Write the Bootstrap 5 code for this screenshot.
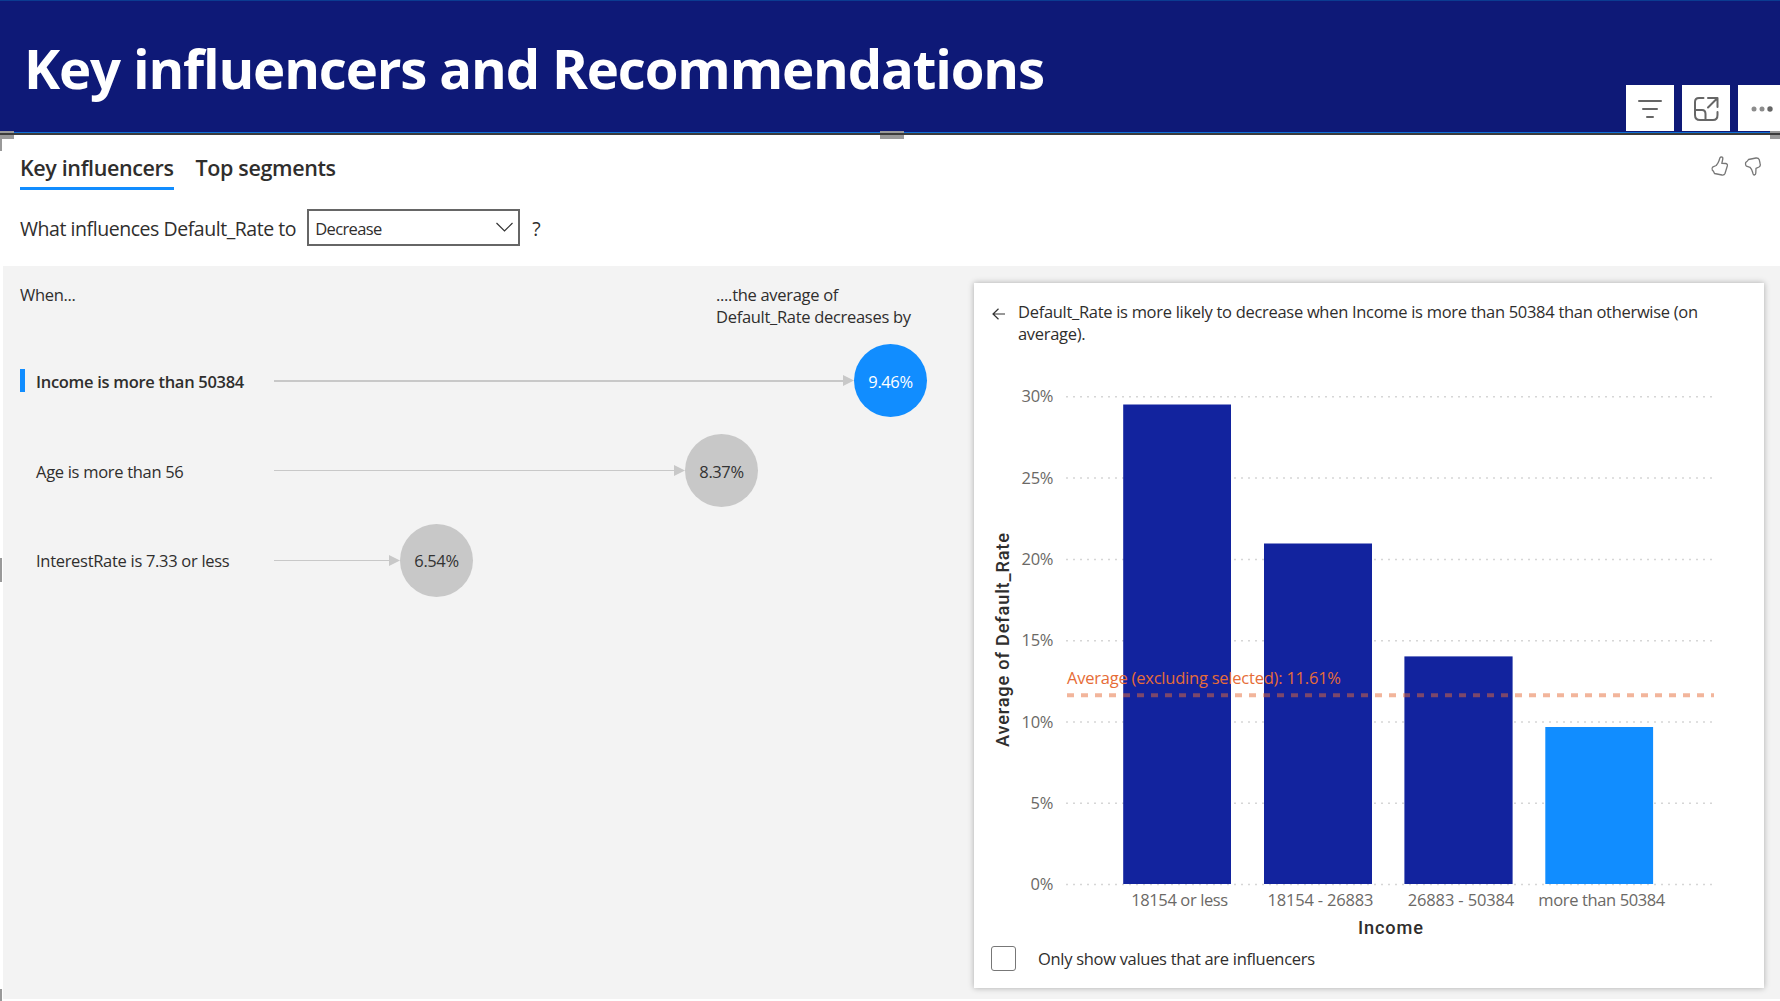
<!DOCTYPE html>
<html lang="en">
<head>
<meta charset="utf-8">
<meta name="viewport" content="width=device-width, initial-scale=1">
<title>Key influencers and Recommendations</title>
<link href="https://cdn.jsdelivr.net/npm/bootstrap@5.3.0/dist/css/bootstrap.min.css" rel="stylesheet">
<style>
  body { font-family: "Open Sans", "Noto Sans", sans-serif; font-size: 16.5px; line-height: 22px; letter-spacing: -.3px; color: #2f2e2d; height: 1001px; overflow: hidden; background: #fff; }
  svg { display: block; flex: none; }
  .report-head { height: 135px; background: #0e1977; border-top: 1px solid #0b3c91; border-bottom: 2px solid #3b3b3b; box-shadow: inset 0 -1px 0 #0f6fd6; padding: 29px 0 0 24px; }
  .report-head h1 { font-size: 54.5px; line-height: 76px; font-weight: 700; letter-spacing: -1.16px; }
  .visual-tools { right: -6px; bottom: 2px; gap: 8px; }
  .tool-btn { width: 48px; height: 46px; background: #fff; border: 0; border-radius: 0; padding: 0; }
  .visual-top { height: 131px; padding: 18px 19px 0 20px; }
  .vtab { font-size: 21.5px; line-height: 28px; font-weight: 600; letter-spacing: -.37px; padding: 1px 0 5px; border-bottom: 3px solid transparent; }
  .vtab.active { border-color: #118dff; }
  .vtab + .vtab { margin-left: 22px; }
  .question { font-size: 19.5px; letter-spacing: -.45px; height: 37px; margin-top: 19px; }
  .question > span { padding-top: 2px; }
  .direction { width: 213px; height: 37px; border: 2px solid #666; border-radius: 0; padding: 0 5px 0 6px; font-size: 16.5px; letter-spacing: -.6px; color: #2f2e2d; margin: 0 12px 0 11px; background: #fff; }
  .direction span { padding-top: 2px; }
  .visual-body { height: 733px; margin-left: 3px; background: #f3f3f3; }
  .list-side { width: 971px; }
  .list-head { height: 70px; padding: 18px 0 0 17px; }
  .avg-head { width: 258px; }
  .factor { height: 89.75px; padding-left: 17px; }
  .marker { width: 5px; height: 23px; margin-right: 11px; }
  .factor.selected .marker { background: #118dff; }
  .factor.selected .factor-name { font-weight: 600; }
  .factor-name { width: 238px; padding-top: 2px; }
  .stem { height: 11px; }
  .stem i { height: 1.5px; background: #c8c8c8; }
  .bubble { width: 73px; height: 73px; background: #c8c8c8; color: #333; letter-spacing: -.4px; padding-top: 2px; }
  .factor.selected .bubble { background: #118dff; color: #fff; }
  .detail { width: 790px; height: 705px; margin-top: 17px; border: 0; border-radius: 0; box-shadow: 0 0 6px rgba(0,0,0,.3); color: inherit; }
  .detail-head { height: 67px; padding: 18px 60px 0 18px; gap: 13px; }
  .detail-head svg { margin-top: 7px; }
  .chk { width: 25px; height: 25px; margin: 0; border: 1.5px solid #777; border-radius: 3px !important; }
  .only { padding: 8px 0 0 17px; gap: 22px; }
  .tick { fill: #6b6966; }
  .axis-name { font-family: Roboto, sans-serif; font-weight: 500; font-size: 18.2px; fill: #2f2e2d; }
</style>
</head>
<body>
<header class="report-head position-relative text-white">
  <h1 class="m-0">Key influencers and Recommendations</h1>
  <div class="visual-tools position-absolute d-flex">
    <button class="tool-btn btn d-flex align-items-center justify-content-center" aria-label="Filters">
      <svg width="26" height="22" viewBox="0 0 26 22" fill="none" stroke="#666" stroke-width="2" stroke-linecap="round"><path d="M2 4h22M6 12h14M10 20h6"/></svg>
    </button>
    <button class="tool-btn btn d-flex align-items-center justify-content-center" aria-label="Focus mode">
      <svg width="26" height="26" viewBox="0 0 26 26" fill="none" stroke="#666" stroke-width="2" stroke-linecap="round" stroke-linejoin="round"><path d="M10.500 3H6Q2 3 2 7V20Q2 25 7 25H20Q24.500 25 24.500 20V17M15 3H24.500V12M24 3.500L15 12.500M2 15H9Q12.500 15 12.500 19V25"/></svg>
    </button>
    <button class="tool-btn btn d-flex align-items-center justify-content-center" aria-label="More options">
      <svg width="24" height="8" viewBox="0 0 24 8" fill="#666"><circle cx="4" cy="5" r="2.500" opacity=".75"/><circle cx="12" cy="5" r="2.500" opacity=".75"/><circle cx="20" cy="5" r="2.700"/></svg>
    </button>
  </div>
</header>

<!-- selection grips of the visual -->
<svg class="position-absolute top-0 start-0 pe-none" width="1780" height="1001" viewBox="0 0 1780 1001" fill="#999">
  <path d="M0 131h14v2H0zM0 135h14v4H2v12H0zM880 131h24v2h-24zM880 135h24v4h-24zM1770 131h10v2h-10zM1770 135h10v4h-10zM0 558h2v24H0zM0 989h2v12H0z"/>
</svg>

<section class="visual-top">
  <div class="d-flex align-items-start">
    <div class="vtab active">Key influencers</div>
    <div class="vtab">Top segments</div>
    <div class="ms-auto d-flex">
      <svg width="52" height="26" viewBox="1709 153 52 26" fill="none" stroke="#777" stroke-width="1.300" stroke-linejoin="round">
        <path d="M1721.300 156.800Q1723.200 156.800 1722.800 159L1721.800 163.300L1725.800 163.500Q1727.800 164 1727.300 166L1725 173.500Q1724.300 175.300 1722 175L1714.500 173.500Q1713.500 170.800 1712.300 170.200Q1711.200 168.500 1713 166.800L1716.200 165.500Q1718.300 163 1719.300 160Q1719.700 157 1721.300 156.800Z"/>
        <path d="M1754.300 175Q1756 174.700 1755.800 172.500L1756 168.300L1759 167Q1760.700 166 1760.200 164L1759.300 159.800Q1758.500 157.800 1756 158L1748.500 159.500Q1747.500 161.500 1745.800 162.300Q1745 165 1746.500 166.200L1750 167.300Q1752 169.500 1752.700 172.500Q1753 175 1754.300 175Z"/>
      </svg>
    </div>
  </div>
  <div class="question d-flex align-items-center">
    <span>What influences Default_Rate to</span>
    <button class="direction d-flex align-items-center justify-content-between"><span>Decrease</span>
      <svg width="17" height="11" viewBox="0 0 17 11" fill="none" stroke="#333" stroke-width="1.200"><path d="M.5 1L8.500 9L16.500 1"/></svg>
    </button>
    <span>?</span>
  </div>
</section>

<main class="visual-body d-flex">
  <div class="list-side">
    <div class="list-head d-flex justify-content-between">
      <div>When...</div>
      <div class="avg-head">....the average of<br>Default_Rate decreases by</div>
    </div>
    <div class="factor selected d-flex align-items-center">
      <span class="marker"></span><span class="factor-name">Income is more than 50384</span>
      <span class="stem d-flex align-items-center" style="width:580px"><i class="flex-grow-1"></i><svg width="11" height="11"><path d="M0 0L11 5.500L0 11Z" fill="#c8c8c8"/></svg></span>
      <span class="bubble rounded-circle d-flex align-items-center justify-content-center">9.46%</span>
    </div>
    <div class="factor d-flex align-items-center">
      <span class="marker"></span><span class="factor-name">Age is more than 56</span>
      <span class="stem d-flex align-items-center" style="width:411px"><i class="flex-grow-1"></i><svg width="11" height="11"><path d="M0 0L11 5.500L0 11Z" fill="#c8c8c8"/></svg></span>
      <span class="bubble rounded-circle d-flex align-items-center justify-content-center">8.37%</span>
    </div>
    <div class="factor d-flex align-items-center">
      <span class="marker"></span><span class="factor-name">InterestRate is 7.33 or less</span>
      <span class="stem d-flex align-items-center" style="width:126px"><i class="flex-grow-1"></i><svg width="11" height="11"><path d="M0 0L11 5.500L0 11Z" fill="#c8c8c8"/></svg></span>
      <span class="bubble rounded-circle d-flex align-items-center justify-content-center">6.54%</span>
    </div>
  </div>

  <div class="detail card">
    <div class="detail-head d-flex align-items-start">
      <svg width="13" height="12" viewBox="0 0 13 12" fill="none" stroke="#333" stroke-width="1.200"><path d="M13 6H1M6.500 .7L1 6L6.500 11.300"/></svg>
      <div>Default_Rate is more likely to decrease when Income is more than 50384 than otherwise (on<br>average).</div>
    </div>
    <svg width="790" height="588" viewBox="974 350 790 588" font-size="16.500" letter-spacing="0">
      <g stroke="#d6d6d6" stroke-width="1.500" stroke-dasharray="2 5">
        <path d="M1066 396.800H1713M1066 478.100H1713M1066 559.400H1713M1066 640.700H1713M1066 722H1713M1066 803.300H1713M1066 884.600H1713"/>
      </g>
      <g class="tick" text-anchor="end">
        <text x="1053.500" y="402" textLength="32">30%</text>
        <text x="1053.500" y="484" textLength="32">25%</text>
        <text x="1053.500" y="565" textLength="32">20%</text>
        <text x="1053.500" y="646" textLength="32">15%</text>
        <text x="1053.500" y="728" textLength="32">10%</text>
        <text x="1053.500" y="809" textLength="23">5%</text>
        <text x="1053.500" y="890" textLength="23">0%</text>
      </g>
      <g fill="#12239e">
        <rect x="1123.200" y="404.500" width="107.800" height="479.500"/>
        <rect x="1264" y="543.500" width="108" height="340.500"/>
        <rect x="1404.400" y="656.400" width="108.200" height="227.600"/>
        <rect x="1545.300" y="727" width="107.800" height="157" fill="#118dff"/>
      </g>
      <path d="M1067 695.300H1714" stroke="#e66c37" stroke-opacity=".5" stroke-width="4" stroke-dasharray="7 7"/>
      <text x="1067" y="684" fill="#e66c37" textLength="274">Average (excluding selected): 11.61%</text>
      <g class="tick" text-anchor="middle">
        <text x="1179.700" y="906" textLength="97">18154 or less</text>
        <text x="1320.500" y="906" textLength="106">18154 - 26883</text>
        <text x="1461" y="906" textLength="106.500">26883 - 50384</text>
        <text x="1601.800" y="906" textLength="127">more than 50384</text>
      </g>
      <text class="axis-name" x="1390.500" y="934" text-anchor="middle" textLength="65">Income</text>
      <text class="axis-name" transform="translate(1009 640) rotate(-90)" text-anchor="middle" textLength="214">Average of Default_Rate</text>
    </svg>
    <label class="only d-flex align-items-center">
      <input class="chk form-check-input" type="checkbox">
      <span>Only show values that are influencers</span>
    </label>
  </div>
</main>
<script src="https://cdn.jsdelivr.net/npm/bootstrap@5.3.0/dist/js/bootstrap.bundle.min.js"></script>
</body>
</html>
